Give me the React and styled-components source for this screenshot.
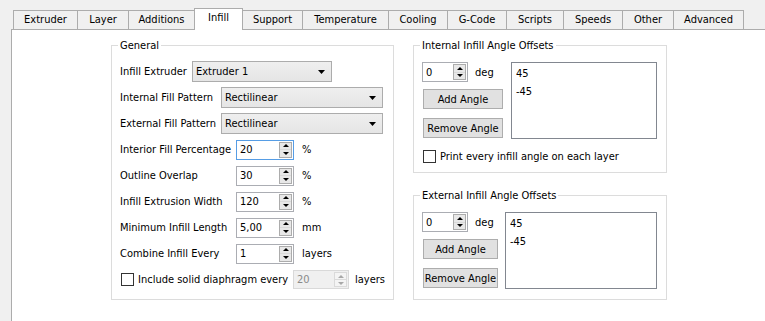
import React from 'react';
import styled, { createGlobalStyle } from 'styled-components';

const GlobalStyle = createGlobalStyle`
  * {
    box-sizing: border-box;
  }

  html,
  body {
    margin: 0;
    padding: 0;
    background: #f0f0f0;
  }

  body {
    font-family: "DejaVu Sans Condensed", "Liberation Sans", sans-serif;
    font-size: 11px;
    color: #000;
  }
`;

const Window = styled.div`
  width: 765px;
  height: 321px;
  overflow: hidden;
  padding: 8px 0 0 11px;
  display: flex;
  flex-direction: column;
`;

const TabBar = styled.div`
  display: flex;
  align-items: flex-end;
  height: 21px;
  padding-left: 2px;
`;

const Tab = styled.div`
  position: relative;
  z-index: ${(p) => (p.$active ? 1 : 0)};
  width: ${(p) => p.$w}px;
  height: ${(p) => (p.$active ? 22 : 19)}px;
  margin-left: -1px;
  margin-bottom: ${(p) => (p.$active ? -1 : 0)}px;
  border: 1px solid #acacac;
  border-bottom: none;
  background: ${(p) => (p.$active ? '#fff' : '#f0f0f0')};
  line-height: 18px;
  text-align: center;
  white-space: nowrap;

  &:first-child {
    margin-left: 0;
  }
`;

const Pane = styled.div`
  flex: 1;
  width: 800px;
  display: flex;
  align-items: flex-start;
  padding: 15px 0 0 99px;
  background: #fff;
  border-top: 1px solid #acacac;
  border-left: 1px solid #acacac;
`;

const Group = styled.div`
  position: relative;
  width: ${(p) => p.$w}px;
  padding: ${(p) => p.$pad};
  border: 1px solid #dcdcdc;
`;

const GroupTitle = styled.span`
  position: absolute;
  top: -7px;
  left: 6px;
  padding: 0 2px;
  background: #fff;
  line-height: 13px;
  white-space: nowrap;
`;

const FormRows = styled.div`
  display: flex;
  flex-direction: column;
  gap: 5px;
`;

const Row = styled.div`
  display: flex;
  align-items: center;
  height: 21px;
`;

const Label = styled.span`
  width: ${(p) => p.$w}px;
  flex-shrink: 0;
  white-space: nowrap;
`;

const Unit = styled.span`
  margin-left: ${(p) => p.$gap || 8}px;
  white-space: nowrap;
`;

const Combo = styled.div`
  width: ${(p) => p.$w}px;
  height: 21px;
  display: flex;
  align-items: center;
  justify-content: space-between;
  padding: 0 6px 0 3px;
  border: 1px solid #acacac;
  background: linear-gradient(#efefef, #e5e5e5);
`;

const SpinBox = styled.div`
  width: ${(p) => p.$w}px;
  height: ${(p) => p.$h || 20}px;
  flex-shrink: 0;
  display: flex;
  align-items: stretch;
  padding-left: 3px;
  border: 1px solid
    ${(p) => (p.$focused ? '#569de5' : p.$disabled ? '#d9d9d9' : '#abadb3')};
  background: ${(p) => (p.$disabled ? '#f0f0f0' : '#fff')};
  color: ${(p) => (p.$disabled ? '#8a8a8a' : '#000')};
`;

const SpinValue = styled.span`
  flex: 1;
  display: flex;
  align-items: center;
`;

const SpinButtons = styled.div`
  width: 13px;
  margin: 1px 1px 1px 0;
  display: flex;
  flex-direction: column;
  border: 1px solid ${(p) => (p.$disabled ? '#dadada' : '#acacac')};
  background: ${(p) => (p.$disabled ? '#f4f4f4' : '#e8e8e8')};
`;

const SpinHalf = styled.div`
  flex: 1;
  display: flex;
  align-items: center;
  justify-content: center;

  & + & {
    border-top: 1px solid ${(p) => (p.$disabled ? '#dadada' : '#acacac')};
  }
`;

const Arrow = styled.span`
  width: 0;
  height: 0;
  border-left: 3px solid transparent;
  border-right: 3px solid transparent;
  ${(p) => (p.$down ? 'border-top' : 'border-bottom')}: 3px solid
    ${(p) => (p.$disabled ? '#a8a8a8' : '#000')};
`;

const CheckBox = styled.span`
  width: 13px;
  height: 13px;
  flex-shrink: 0;
  margin-left: 1px;
  border: 1px solid #333;
  background: #fff;
`;

const CheckText = styled.span`
  width: ${(p) => (p.$w ? `${p.$w}px` : 'auto')};
  flex-shrink: 0;
  margin-left: 4px;
  white-space: nowrap;
`;

const Column = styled.div`
  display: flex;
  flex-direction: column;
  gap: 22px;
  margin-left: 19px;
`;

const AngleBody = styled.div`
  display: flex;
  align-items: flex-start;
`;

const AngleControls = styled.div`
  display: flex;
  flex-direction: column;
`;

const SpinRow = styled.div`
  display: flex;
  align-items: center;
`;

const Button = styled.div`
  width: ${(p) => p.$w}px;
  height: 20px;
  margin: ${(p) => p.$top}px 0 0 1px;
  display: flex;
  align-items: center;
  justify-content: center;
  border: 1px solid #adadad;
  background: #e1e1e1;
  white-space: nowrap;
`;

const ListBox = styled.div`
  width: ${(p) => p.$w}px;
  height: 77px;
  margin-left: ${(p) => p.$gap}px;
  padding: 2px 4px;
  border: 1px solid #828790;
  background: #fff;
  line-height: 18px;
`;

const CheckRow = styled.div`
  display: flex;
  align-items: center;
  margin-top: 11px;
`;

const tabs = [
  ['Extruder', 65],
  ['Layer', 52],
  ['Additions', 67],
  ['Infill', 49],
  ['Support', 61],
  ['Temperature', 87],
  ['Cooling', 60],
  ['G-Code', 60],
  ['Scripts', 58],
  ['Speeds', 60],
  ['Other', 52],
  ['Advanced', 71],
];

const spinRows = [
  ['Interior Fill Percentage', '20', '%', true],
  ['Outline Overlap', '30', '%'],
  ['Infill Extrusion Width', '120', '%'],
  ['Minimum Infill Length', '5,00', 'mm'],
  ['Combine Infill Every', '1', 'layers'],
];

const ComboArrow = () => (
  <svg width="7" height="4" viewBox="0 0 7 4">
    <polygon points="0,0 7,0 3.5,4" fill="#000" />
  </svg>
);

const Spin = ({ value, w, h, focused, disabled }) => (
  <SpinBox $w={w} $h={h} $focused={focused} $disabled={disabled}>
    <SpinValue>{value}</SpinValue>
    <SpinButtons $disabled={disabled}>
      <SpinHalf $disabled={disabled}>
        <Arrow $disabled={disabled} />
      </SpinHalf>
      <SpinHalf $disabled={disabled}>
        <Arrow $down $disabled={disabled} />
      </SpinHalf>
    </SpinButtons>
  </SpinBox>
);

const AngleGroup = ({ title, buttonWidth, listWidth, listGap, pad, children }) => (
  <Group $w={254} $pad={pad}>
    <GroupTitle>{title}</GroupTitle>
    <AngleBody>
      <AngleControls>
        <SpinRow>
          <Spin value="0" w={46} />
          <Unit $gap={7}>deg</Unit>
        </SpinRow>
        <Button $w={buttonWidth} $top={7}>Add Angle</Button>
        <Button $w={buttonWidth} $top={9}>Remove Angle</Button>
      </AngleControls>
      <ListBox $w={listWidth} $gap={listGap}>
        <div>45</div>
        <div>-45</div>
      </ListBox>
    </AngleBody>
    {children}
  </Group>
);

const App = () => (
  <>
    <GlobalStyle />
    <Window>
      <TabBar>
        {tabs.map(([name, w]) => (
          <Tab key={name} $w={w} $active={name === 'Infill'}>
            {name}
          </Tab>
        ))}
      </TabBar>
      <Pane>
        <Group $w={283} $pad="15px 0 9px 8px">
          <GroupTitle>General</GroupTitle>
          <FormRows>
            <Row>
              <Label $w={72}>Infill Extruder</Label>
              <Combo $w={140}>
                Extruder 1
                <ComboArrow />
              </Combo>
            </Row>
            <Row>
              <Label $w={101}>Internal Fill Pattern</Label>
              <Combo $w={162}>
                Rectilinear
                <ComboArrow />
              </Combo>
            </Row>
            <Row>
              <Label $w={101}>External Fill Pattern</Label>
              <Combo $w={162}>
                Rectilinear
                <ComboArrow />
              </Combo>
            </Row>
            {spinRows.map(([label, value, unit, focused]) => (
              <Row key={label}>
                <Label $w={116}>{label}</Label>
                <Spin value={value} w={58} focused={focused} />
                <Unit>{unit}</Unit>
              </Row>
            ))}
            <Row>
              <CheckBox />
              <CheckText $w={155}>Include solid diaphragm every</CheckText>
              <Spin value="20" w={56} h={19} disabled />
              <Unit $gap={6}>layers</Unit>
            </Row>
          </FormRows>
        </Group>
        <Column>
          <AngleGroup
            title="Internal Infill Angle Offsets"
            buttonWidth={80}
            listWidth={146}
            listGap={8}
            pad="16px 0 9px 8px"
          >
            <CheckRow>
              <CheckBox />
              <CheckText>Print every infill angle on each layer</CheckText>
            </CheckRow>
          </AngleGroup>
          <AngleGroup
            title="External Infill Angle Offsets"
            buttonWidth={75}
            listWidth={152}
            listGap={7}
            pad="16px 0 10px 8px"
          />
        </Column>
      </Pane>
    </Window>
  </>
);

export default App;
